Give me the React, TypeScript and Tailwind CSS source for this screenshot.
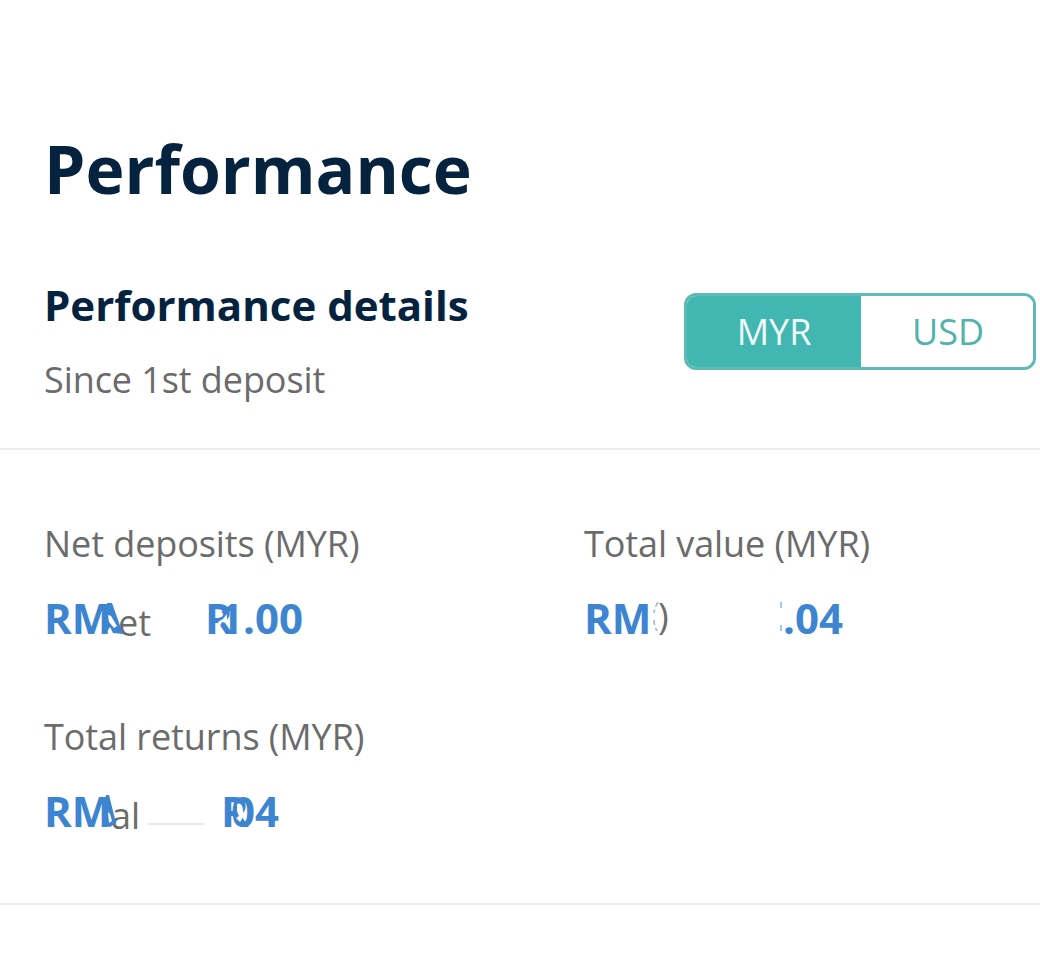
const font = "[font-family:'Open_Sans',sans-serif]";

function Label({ children }: { children: React.ReactNode }) {
  return <div className="text-[36px] leading-[48px] tracking-[-0.08px] text-[#6b6b6b]">{children}</div>;
}

function Blue({ className, children }: { className: string; children: React.ReactNode }) {
  return <span className={`absolute top-0 text-[42px] leading-[50px] font-bold text-[#3d85d1] ${className}`}>{children}</span>;
}

function Grey({ className, children }: { className: string; children: React.ReactNode }) {
  return <span className={`absolute text-[36px] leading-[50px] text-[#6b6b6b] ${className}`}>{children}</span>;
}

export default function App() {
  return (
    <div className={`w-[1040px] h-[953px] bg-white overflow-hidden flex flex-col ${font}`}>
      <h1 className="pl-[44px] pt-[123px] text-[66px] leading-[90px] font-bold text-[#05233f]">Performance</h1>
      <div className="flex justify-between items-start pl-[44px] pr-[4px] pt-[66px] pb-[44px] border-b-2 border-[#ececec]">
        <div>
          <div className="text-[42px] leading-[52px] font-bold text-[#05233f]">Performance details</div>
          <div className="mt-[25px] text-[36px] leading-[48px] tracking-[-0.08px] text-[#6b6b6b]">Since 1st deposit</div>
        </div>
        <div className="mt-[14px] w-[352px] h-[77px] flex rounded-[12px] border-[3px] border-[#5dbab5] overflow-hidden text-[36px]">
          <div className="w-[174px] bg-[#42b7b1] text-[#f1fbfa] flex items-center justify-center">MYR</div>
          <div className="flex-1 pl-[2px] bg-white text-[#4fb3ae] flex items-center justify-center">USD</div>
        </div>
      </div>
      <div className="grid grid-cols-[540px_1fr] pl-[44px] pt-[70px] pb-[67px] border-b-2 border-[#ececec]">
        <div className="h-[193px]">
          <Label>Net deposits (MYR)</Label>
          <div className="relative mt-[25px] h-[50px]">
            <Grey className="left-[74px] top-[5px]">et</Grey>
            <Blue className="left-0">RM</Blue>
            <svg className="absolute left-[57px] top-[8px]" width="24" height="36" viewBox="0 0 24 36">
              <path d="M6 2 L11 2 L22 33 L12 32 L9 26 L5 32 L1 32 Z" fill="#3d85d1" />
              <path d="M7 14 L10 15 L16 25 L13 27 L8 21 Z" fill="#ffffff" />
            </svg>
            <Blue className="left-[161px]">R</Blue>
            <Blue className="left-[175px]">1.00</Blue>
            <svg className="absolute left-[173px] top-[19px]" width="12" height="16" viewBox="0 0 12 16">
              <path d="M1 10 L6 7 L10 2 L10 11 L5 10 L3 14 Z" fill="#ffffff" />
            </svg>
          </div>
        </div>
        <div className="h-[193px]">
          <Label>Total value (MYR)</Label>
          <div className="relative mt-[25px] h-[50px]">
            <Blue className="left-0">RM</Blue>
            <Grey className="left-[74px] top-[-2px]">)</Grey>
            <svg className="absolute left-[68px] top-[8px]" width="8" height="32" viewBox="0 0 8 32">
              <path d="M6 1 C3 6 2 10 2 12 M2 19 C2 23 3 26 5 30" fill="none" stroke="#9fb4c8" strokeWidth="1.5" strokeDasharray="5 3" />
            </svg>
            <svg className="absolute left-[195px] top-[9px]" width="4" height="30" viewBox="0 0 4 30">
              <path d="M2 0 V6 M2 23 V29" fill="none" stroke="#8fb4dd" strokeWidth="1.5" />
            </svg>
            <Blue className="left-[199px]">.04</Blue>
          </div>
        </div>
        <div>
          <Label>Total returns (MYR)</Label>
          <div className="relative mt-[25px] h-[50px]">
            <Grey className="left-[67px] top-[5px]">al</Grey>
            <Blue className="left-0">RM</Blue>
            <svg className="absolute left-[58px] top-[7px]" width="16" height="36" viewBox="0 0 16 36">
              <path d="M4 2 L7 2 L14 30 L8 34 L3 33 L1 30 Z" fill="#3d85d1" />
              <path d="M6 19 L8 21 L10 28 L7 30 Z" fill="#ffffff" />
            </svg>
            <span className="absolute left-[104px] top-[37px] w-[56px] h-[2px] bg-[#e8e8e8]" />
            <Blue className="left-[187px]">04</Blue>
            <Blue className="left-[177px]">R</Blue>
            <svg className="absolute left-[190px] top-[16px]" width="14" height="24" viewBox="0 0 14 24">
              <path d="M3 2 C6 0 9 3 9 9 C9 14 8 18 6 20 L2 16 L5 14 L3 9 Z" fill="#ffffff" />
            </svg>
          </div>
        </div>
      </div>
    </div>
  );
}
